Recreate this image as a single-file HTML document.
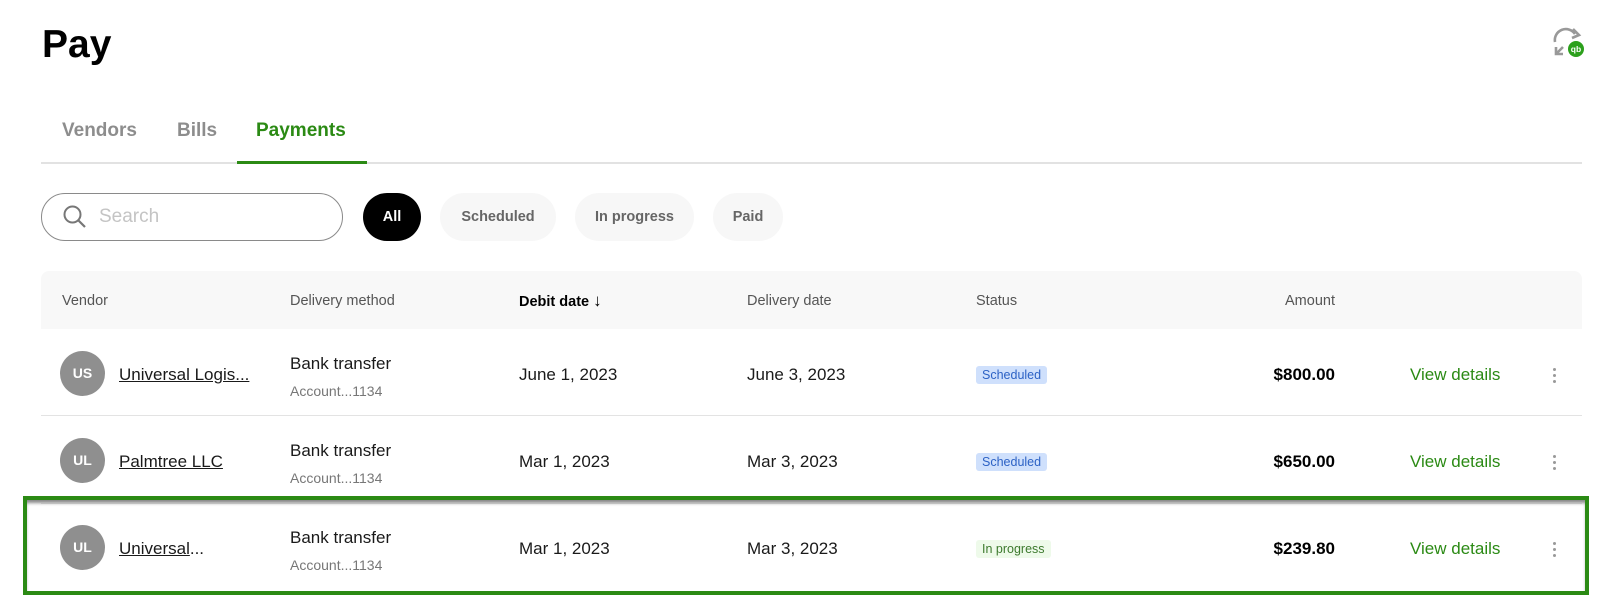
<!DOCTYPE html>
<html><head><meta charset="utf-8"><style>
*{box-sizing:border-box;margin:0;padding:0}
body{width:1614px;height:600px;background:#fff;font-family:"Liberation Sans",sans-serif;color:#1a1a1a;position:relative;overflow:hidden}
.a{position:absolute;white-space:nowrap}
.title{left:42px;top:23px;font-size:39px;font-weight:bold;color:#000}
.tab{top:120px;font-size:19px;font-weight:bold;color:#8d8d8d}
.pill{top:193px;height:48px;border-radius:24px;background:#f7f7f7;font-size:14.5px;font-weight:bold;color:#666;line-height:48px;text-align:center}
.hd{font-size:14.5px;color:#555;top:293px}
.row{left:41px;width:1541px;height:87px;border-bottom:1px solid #e3e3e3}
.av{width:45px;height:45px;border-radius:50%;background:#8f8f8f;color:#fff;font-weight:bold;font-size:14px;text-align:center;line-height:45px;left:60px}
.t{font-size:17px;color:#1a1a1a}
.s{font-size:14px;color:#777}
.badge{font-size:12.5px;padding:2px 6px;border-radius:3px}
.vd{font-size:17px;color:#2b8a14;left:1410px}
.amt{font-size:17px;font-weight:bold;color:#000;right:279px}
.keb{left:1553px;width:4px}
.keb i{display:block;width:3px;height:3px;border-radius:50%;background:#999;margin-bottom:3px}
</style></head><body>
<div class="a title">Pay</div>
<svg class="a" style="left:1552px;top:27px" width="34" height="32" viewBox="0 0 34 32">
<path d="M3 15 A11 11 0 0 1 23 7" fill="none" stroke="#999" stroke-width="2.6"/>
<path d="M21 2 L27 8 L20 11" fill="none" stroke="#999" stroke-width="2.6"/>
<path d="M4 20 L4 27 L11 27 M4 27 L11 20" fill="none" stroke="#999" stroke-width="2.6"/>
<circle cx="24" cy="22" r="8" fill="#2ca01c"/>
<text x="24" y="25" font-size="8.5" font-weight="bold" fill="#fff" text-anchor="middle" font-family="Liberation Sans">qb</text>
</svg>
<div class="a tab" style="left:62px">Vendors</div>
<div class="a tab" style="left:177px">Bills</div>
<div class="a tab" style="left:256px;color:#2b8a14">Payments</div>
<div class="a" style="left:41px;top:162px;width:1541px;height:2px;background:#e2e2e2"></div>
<div class="a" style="left:237px;top:161px;width:130px;height:3px;background:#2b8a14"></div>
<div class="a" style="left:41px;top:193px;width:302px;height:48px;border:1px solid #8a8a8a;border-radius:24px"></div>
<svg class="a" style="left:62px;top:204px" width="26" height="26" viewBox="0 0 26 26"><circle cx="10.5" cy="10.5" r="8" fill="none" stroke="#777" stroke-width="2"/><path d="M16.5 16.5 L23 23" stroke="#777" stroke-width="2.2"/></svg>
<div class="a" style="left:99px;top:206px;font-size:19px;color:#c4c4c4">Search</div>
<div class="a pill" style="left:363px;width:58px;background:#000;color:#fff">All</div>
<div class="a pill" style="left:440px;width:116px">Scheduled</div>
<div class="a pill" style="left:575px;width:119px">In progress</div>
<div class="a pill" style="left:713px;width:70px">Paid</div>
<div class="a" style="left:41px;top:271px;width:1541px;height:58px;background:#f8f8f8;border-radius:8px 8px 0 0"></div>
<div class="a hd" style="left:62px">Vendor</div>
<div class="a hd" style="left:290px">Delivery method</div>
<div class="a hd" style="left:519px;top:291px;color:#000;font-weight:bold">Debit date <span style="font-weight:normal;font-size:17px">&#8595;</span></div>
<div class="a hd" style="left:747px">Delivery date</div>
<div class="a hd" style="left:976px">Status</div>
<div class="a hd" style="right:279px">Amount</div>

<div class="a row" style="top:329px"></div>
<div class="a row" style="top:417px"></div>

<!-- row1 -->
<div class="a av" style="top:351px">US</div>
<div class="a t" style="left:119px;top:365px;text-decoration:underline">Universal Logis...</div>
<div class="a t" style="left:290px;top:354px">Bank transfer</div>
<div class="a s" style="left:290px;top:383px">Account...1134</div>
<div class="a t" style="left:519px;top:365px">June 1, 2023</div>
<div class="a t" style="left:747px;top:365px">June 3, 2023</div>
<div class="a badge" style="left:976px;top:366px;background:#cfe0fc;color:#2d62c5">Scheduled</div>
<div class="a amt" style="top:365px">$800.00</div>
<div class="a vd" style="top:365px">View details</div>
<div class="a keb" style="top:368px"><i></i><i></i><i></i></div>
<!-- row2 -->
<div class="a av" style="top:438px">UL</div>
<div class="a t" style="left:119px;top:452px;text-decoration:underline">Palmtree LLC</div>
<div class="a t" style="left:290px;top:441px">Bank transfer</div>
<div class="a s" style="left:290px;top:470px">Account...1134</div>
<div class="a t" style="left:519px;top:452px">Mar 1, 2023</div>
<div class="a t" style="left:747px;top:452px">Mar 3, 2023</div>
<div class="a badge" style="left:976px;top:453px;background:#cfe0fc;color:#2d62c5">Scheduled</div>
<div class="a amt" style="top:452px">$650.00</div>
<div class="a vd" style="top:452px">View details</div>
<div class="a keb" style="top:455px"><i></i><i></i><i></i></div>
<!-- row3 -->
<div class="a" style="left:23px;top:496px;width:1566px;height:99px;border:4px solid #2b8a14;box-shadow:inset 0 4px 3px -1px #888"></div>
<div class="a av" style="top:525px">UL</div>
<div class="a t" style="left:119px;top:539px"><u>Universal</u>...</div>
<div class="a t" style="left:290px;top:528px">Bank transfer</div>
<div class="a s" style="left:290px;top:557px">Account...1134</div>
<div class="a t" style="left:519px;top:539px">Mar 1, 2023</div>
<div class="a t" style="left:747px;top:539px">Mar 3, 2023</div>
<div class="a badge" style="left:976px;top:540px;background:#eefaea;color:#3d7a2e">In progress</div>
<div class="a amt" style="top:539px">$239.80</div>
<div class="a vd" style="top:539px">View details</div>
<div class="a keb" style="top:542px"><i></i><i></i><i></i></div>
</body></html>
